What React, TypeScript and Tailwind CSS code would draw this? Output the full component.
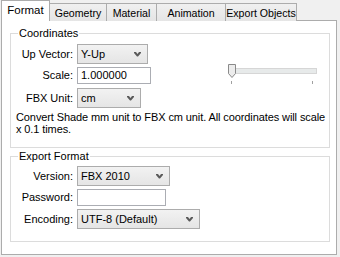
import React from "react";

function Chevron() {
  return (
    <svg width="7" height="5" viewBox="0 0 7 5" className="shrink-0">
      <path d="M0 0h2l1.5 2L5 0h2v1L4 4.5H3L0 1z" fill="#5a5a5a" />
    </svg>
  );
}

function Select({ value, width }: { value: string; width: string }) {
  return (
    <div
      className={`${width} h-[20px] flex items-center justify-between pl-[3px] pr-[6px] border border-[#acacac] bg-gradient-to-b from-[#f2f2f2] to-[#e5e5e5]`}
    >
      <span>{value}</span>
      <Chevron />
    </div>
  );
}

function Row({ label, children, mt }: { label: string; children: React.ReactNode; mt: string }) {
  return (
    <div className={`flex items-center gap-[4px] ${mt}`}>
      <div className="w-[62px] text-right shrink-0">{label}</div>
      {children}
    </div>
  );
}

function Slider() {
  return (
    <svg width="92" height="17" viewBox="0 0 92 17" className="overflow-visible ml-[73px]">
      <rect x="0.5" y="1.5" width="88" height="5" fill="#e7eaea" stroke="#d6d6d6" />
      <path d="M0.5 -2.5h7v9l-3.5 4l-3.5 -4z" fill="#ececec" stroke="#8a8a8a" />
      <line x1="3.5" y1="14" x2="3.5" y2="17" stroke="#a0a0a0" />
      <line x1="84.5" y1="14" x2="84.5" y2="17" stroke="#a0a0a0" />
    </svg>
  );
}

export default function App() {
  const tabs = [
    ["Geometry", "w-[58px]"],
    ["Material", "w-[51px]"],
    ["Animation", "w-[70px]"],
    ["Export Objects", "w-[72px]"],
  ];
  return (
    <div
      className="w-[340px] h-[257px] bg-[#f0f0f0] text-[11px] leading-[13px] text-black overflow-hidden"
      style={{ fontFamily: '"Liberation Sans", Arial, sans-serif' }}
    >
      <div className="flex items-end pl-[1px] pt-[1px] h-[21px]">
        <div className="h-[21px] w-[49px] bg-white border border-b-0 border-[#acacac] pt-[3px] text-[11.5px] text-center relative z-10">
          Format
        </div>
        {tabs.map(([t, w]) => (
          <div
            key={t}
            className={`${w} h-[18px] -ml-px border border-b-0 border-[#acacac] bg-gradient-to-b from-[#f0f0f0] to-[#e5e5e5] pt-[3px] text-center text-[10.6px] whitespace-nowrap`}
          >
            {t}
          </div>
        ))}
      </div>
      <div className="ml-[1px] w-[336px] h-[235px] -mt-px bg-white border border-[#acacac] pl-[8px] pr-[6px] pt-[6px]">
        <fieldset className="border border-[#dcdcdc] h-[121px]">
          <legend className="px-[1px] ml-[7px] leading-[13px]">Coordinates</legend>
          <Row label="Up Vector:" mt="mt-[4px]">
            <Select value="Y-Up" width="w-[71px]" />
          </Row>
          <div className="flex items-center gap-[4px] mt-[3px]">
            <div className="w-[62px] text-right shrink-0">Scale:</div>
            <div className="w-[74px] h-[17px] border border-[#abadb3] pl-[3px] flex items-center">1.000000</div>
            <Slider />
          </div>
          <Row label="FBX Unit:" mt="mt-[4px]">
            <Select value="cm" width="w-[64px]" />
          </Row>
          <div className="ml-[5px] mt-[3px] leading-[12px] tracking-[-0.1px] whitespace-nowrap">
            Convert Shade mm unit to FBX cm unit. All coordinates will scale
            <br />x 0.1 times.
          </div>
        </fieldset>
        <fieldset className="border border-[#dcdcdc] h-[92px] mt-[2px]">
          <legend className="px-[1px] ml-[7px] leading-[13px]">Export Format</legend>
          <Row label="Version:" mt="mt-[3px]">
            <Select value="FBX 2010" width="w-[93px]" />
          </Row>
          <Row label="Password:" mt="mt-[3px]">
            <div className="w-[89px] h-[17px] border border-[#abadb3]" />
          </Row>
          <Row label="Encoding:" mt="mt-[3px]">
            <Select value="UTF-8 (Default)" width="w-[123px]" />
          </Row>
        </fieldset>
      </div>
    </div>
  );
}
